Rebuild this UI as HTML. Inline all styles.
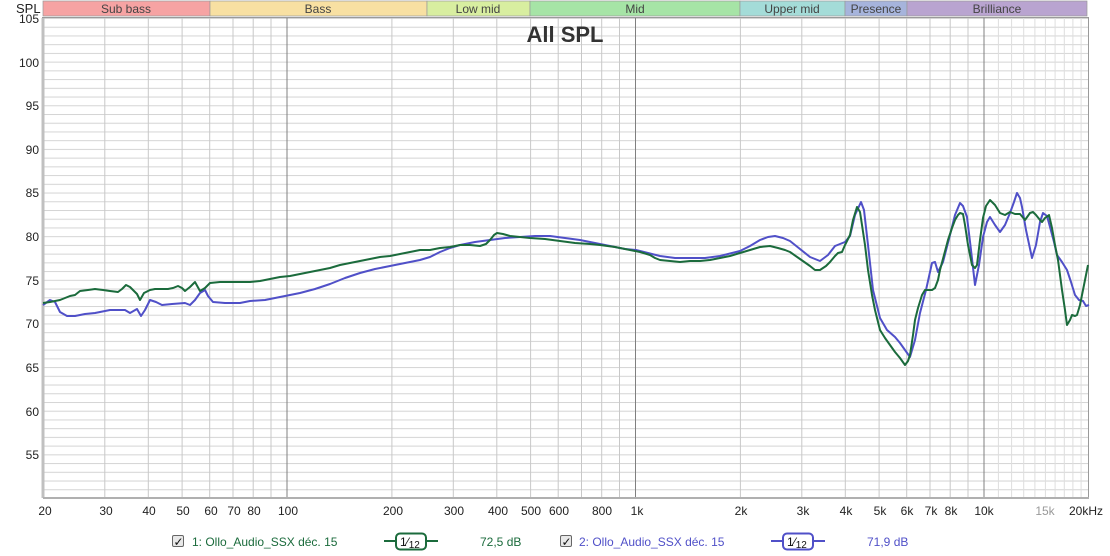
<!DOCTYPE html>
<html><head><meta charset="utf-8"><style>
html,body{margin:0;padding:0;background:#fff;width:1110px;height:556px;overflow:hidden}
svg{display:block;font-family:"Liberation Sans",Arial,sans-serif}
</style></head><body>
<svg width="1110" height="556" viewBox="0 0 1110 556">
<defs>
<pattern id="hg" x="0" y="18" width="10" height="8.727" patternUnits="userSpaceOnUse">
<line x1="0" y1="0.5" x2="10" y2="0.5" stroke="#d4d4d4" stroke-width="1"/>
</pattern>
</defs>
<!-- band header -->
<g font-size="12" fill="#444" text-anchor="middle">
<rect x="43" y="1" width="167" height="15" fill="#f6a3a3" stroke="#999" stroke-width="0.7"/><text x="126" y="13">Sub bass</text>
<rect x="210" y="1" width="217" height="15" fill="#f8e0a2" stroke="#999" stroke-width="0.7"/><text x="318" y="13">Bass</text>
<rect x="427" y="1" width="103" height="15" fill="#d8eea0" stroke="#999" stroke-width="0.7"/><text x="478" y="13">Low mid</text>
<rect x="530" y="1" width="210" height="15" fill="#a6e4a6" stroke="#999" stroke-width="0.7"/><text x="635" y="13">Mid</text>
<rect x="740" y="1" width="105" height="15" fill="#a4dcd8" stroke="#999" stroke-width="0.7"/><text x="792" y="13">Upper mid</text>
<rect x="845" y="1" width="62" height="15" fill="#a6b4dc" stroke="#999" stroke-width="0.7"/><text x="876" y="13">Presence</text>
<rect x="907" y="1" width="180" height="15" fill="#b9a4d0" stroke="#999" stroke-width="0.7"/><text x="997" y="13">Brilliance</text>
</g>
<text x="16" y="13" font-size="13" fill="#222">SPL</text>
<!-- plot -->
<rect x="43" y="17" width="1046" height="481" fill="url(#hg)"/>
<g stroke="#c8c8c8" stroke-width="1">
<line x1="104.8" y1="17" x2="104.8" y2="498"/><line x1="148.3" y1="17" x2="148.3" y2="498"/><line x1="182.1" y1="17" x2="182.1" y2="498"/><line x1="209.7" y1="17" x2="209.7" y2="498"/><line x1="233" y1="17" x2="233" y2="498"/><line x1="253.2" y1="17" x2="253.2" y2="498"/><line x1="271" y1="17" x2="271" y2="498"/>
<line x1="391.9" y1="17" x2="391.9" y2="498"/><line x1="453.3" y1="17" x2="453.3" y2="498"/><line x1="496.8" y1="17" x2="496.8" y2="498"/><line x1="530.6" y1="17" x2="530.6" y2="498"/><line x1="558.2" y1="17" x2="558.2" y2="498"/><line x1="581.5" y1="17" x2="581.5" y2="498"/><line x1="601.7" y1="17" x2="601.7" y2="498"/><line x1="619.5" y1="17" x2="619.5" y2="498"/>
<line x1="740.4" y1="17" x2="740.4" y2="498"/><line x1="801.8" y1="17" x2="801.8" y2="498"/><line x1="845.3" y1="17" x2="845.3" y2="498"/><line x1="879.1" y1="17" x2="879.1" y2="498"/><line x1="906.7" y1="17" x2="906.7" y2="498"/><line x1="930" y1="17" x2="930" y2="498"/><line x1="950.2" y1="17" x2="950.2" y2="498"/><line x1="968" y1="17" x2="968" y2="498"/>
</g>
<g stroke="#dedede" stroke-width="1">
<line x1="998.4" y1="17" x2="998.4" y2="498"/><line x1="1011.6" y1="17" x2="1011.6" y2="498"/><line x1="1023.7" y1="17" x2="1023.7" y2="498"/><line x1="1034.9" y1="17" x2="1034.9" y2="498"/><line x1="1045.4" y1="17" x2="1045.4" y2="498"/><line x1="1055.1" y1="17" x2="1055.1" y2="498"/><line x1="1064.3" y1="17" x2="1064.3" y2="498"/><line x1="1072.9" y1="17" x2="1072.9" y2="498"/><line x1="1081.1" y1="17" x2="1081.1" y2="498"/>
</g>
<g stroke="#808080" stroke-width="1">
<line x1="287" y1="17" x2="287" y2="498"/><line x1="635.5" y1="17" x2="635.5" y2="498"/><line x1="984" y1="17" x2="984" y2="498"/>
</g>
<rect x="42.5" y="17.5" width="1046" height="480" fill="none" stroke="#9a9a9a" stroke-width="1"/>
<line x1="43" y1="18" x2="43" y2="498" stroke="#c0c0c0" stroke-width="3"/>
<line x1="43" y1="498" x2="1089" y2="498" stroke="#b0b0b0" stroke-width="2"/>
<text x="565" y="42" font-size="22" font-weight="bold" fill="#333" text-anchor="middle">All SPL</text>
<!-- y labels -->
<g font-size="12" fill="#222" text-anchor="end">
<text x="39" y="23">105</text><text x="39" y="67">100</text><text x="39" y="110">95</text><text x="39" y="154">90</text><text x="39" y="197">85</text><text x="39" y="241">80</text><text x="39" y="285">75</text><text x="39" y="328">70</text><text x="39" y="372">65</text><text x="39" y="416">60</text><text x="39" y="459">55</text>
</g>
<!-- x labels -->
<g font-size="12" fill="#222" text-anchor="middle">
<text x="45" y="515">20</text><text x="106" y="515">30</text><text x="149" y="515">40</text><text x="183" y="515">50</text><text x="211" y="515">60</text><text x="234" y="515">70</text><text x="254" y="515">80</text><text x="288" y="515">100</text>
<text x="393" y="515">200</text><text x="454" y="515">300</text><text x="498" y="515">400</text><text x="531" y="515">500</text><text x="559" y="515">600</text><text x="602" y="515">800</text><text x="637" y="515">1k</text>
<text x="741" y="515">2k</text><text x="803" y="515">3k</text><text x="846" y="515">4k</text><text x="880" y="515">5k</text><text x="907" y="515">6k</text><text x="931" y="515">7k</text><text x="951" y="515">8k</text><text x="984" y="515">10k</text>
<text x="1045" y="515" fill="#999">15k</text><text x="1086" y="515">20kHz</text>
</g>
<!-- curves -->
<polyline fill="none" stroke="#5050c8" stroke-width="2" stroke-linejoin="round" points="43,305 50,300 55,302 60,312 67,316 75,316 85,314 95,313 110,310 120,310 125,310 130,313 137,309 141,316 145,310 150,300 156,302 162,305 172,304 185,303 190,305 195,300 200,293 205,290 208,296 213,302 225,303 240,303 250,301 265,300 280,297 300,293 315,289 330,284 345,278 360,273 375,269 390,266 405,263 420,260 430,257 440,252 450,248 460,245 475,242 490,240 505,238 520,237 535,236 550,236 565,238 580,240 595,243 610,246 625,249 636,250 648,253 660,256 675,258 690,258 705,258 720,256 732,253 740,251 750,246 760,240 768,237 775,236 783,238 790,241 800,249 810,257 820,261 828,255 835,246 845,242 850,236 855,215 861,202 864,210 868,245 873,290 880,318 887,330 895,337 900,343 905,350 910,357 915,340 920,313 926,290 932,263 935,262 938,272 943,262 950,235 955,215 960,203 963,206 967,217 971,250 975,285 979,265 983,237 987,222 990,217 995,225 1000,232 1005,225 1010,213 1014,202 1017,193 1020,198 1022,207 1026,230 1032,258 1036,245 1040,222 1043,213 1047,216 1050,227 1054,242 1057,255 1062,262 1067,270 1071,282 1075,295 1079,300 1083,301 1086,306 1089,305"/>
<polyline fill="none" stroke="#1b6b3c" stroke-width="2" stroke-linejoin="round" points="43,303 50,302 55,301 60,300 65,298 70,296 75,295 80,291 88,290 95,289 103,290 110,291 118,292 122,289 126,285 130,287 133,290 137,294 140,300 144,293 150,290 155,289 162,289 168,289 173,288 178,286 182,288 185,291 190,287 195,282 200,291 205,288 210,283 220,282 230,282 240,282 250,282 260,281 270,279 280,277 290,276 300,274 310,272 320,270 330,268 340,265 350,263 360,261 370,259 380,257 390,256 400,254 410,252 420,250 430,250 440,248 450,247 460,245 470,245 480,246 486,244 490,240 494,235 497,233 503,234 510,236 520,237 530,238 545,239 560,241 575,243 590,244 600,245 615,247 630,250 640,252 650,255 655,258 660,260 670,261 680,262 690,261 700,261 710,260 720,258 730,256 740,253 750,250 760,247 770,246 778,248 785,250 790,252 800,259 810,266 815,270 820,270 826,266 830,262 835,256 838,253 842,252 845,245 850,235 853,220 857,207 860,212 862,225 865,245 868,270 872,295 875,310 880,330 885,338 890,345 895,352 900,358 905,365 908,361 910,355 913,335 915,320 918,308 922,295 925,290 928,290 932,290 935,288 938,280 940,270 944,255 948,240 952,228 955,220 958,215 960,213 963,214 965,225 968,245 972,265 975,268 977,265 980,240 983,218 986,206 990,200 995,205 1000,213 1005,215 1010,212 1015,214 1020,214 1025,220 1030,213 1033,212 1036,215 1040,220 1042,222 1045,218 1049,215 1052,228 1055,245 1058,260 1062,290 1065,310 1067,325 1070,320 1072,315 1075,316 1077,315 1080,305 1083,290 1086,275 1088,265"/>
<!-- legend -->
<g font-size="12">
<rect x="172.5" y="535.5" width="11" height="11" fill="#e8e8e8" stroke="#666" stroke-width="1" rx="1.5"/>
<text x="173.5" y="546" font-size="12" fill="#111">✓</text>
<text x="192" y="546" fill="#1b6b3c">1: Ollo_Audio_SSX déc. 15</text>
<line x1="384" y1="541" x2="438" y2="541" stroke="#1b6b3c" stroke-width="2"/>
<rect x="396" y="533.5" width="30" height="16" rx="4" fill="#fff" stroke="#1b6b3c" stroke-width="2"/>
<text x="400" y="546" font-size="12" fill="#111">1⁄<tspan font-size="10" dy="2">12</tspan></text>
<text x="480" y="546" fill="#1b6b3c">72,5 dB</text>
<rect x="560.5" y="535.5" width="11" height="11" fill="#e8e8e8" stroke="#666" stroke-width="1" rx="1.5"/>
<text x="561.5" y="546" font-size="12" fill="#111">✓</text>
<text x="579" y="546" fill="#5050c8">2: Ollo_Audio_SSX déc. 15</text>
<line x1="771" y1="541" x2="825" y2="541" stroke="#5050c8" stroke-width="2"/>
<rect x="783" y="533.5" width="30" height="16" rx="4" fill="#fff" stroke="#5050c8" stroke-width="2"/>
<text x="787" y="546" font-size="12" fill="#111">1⁄<tspan font-size="10" dy="2">12</tspan></text>
<text x="867" y="546" fill="#5050c8">71,9 dB</text>
</g>
</svg>
</body></html>
